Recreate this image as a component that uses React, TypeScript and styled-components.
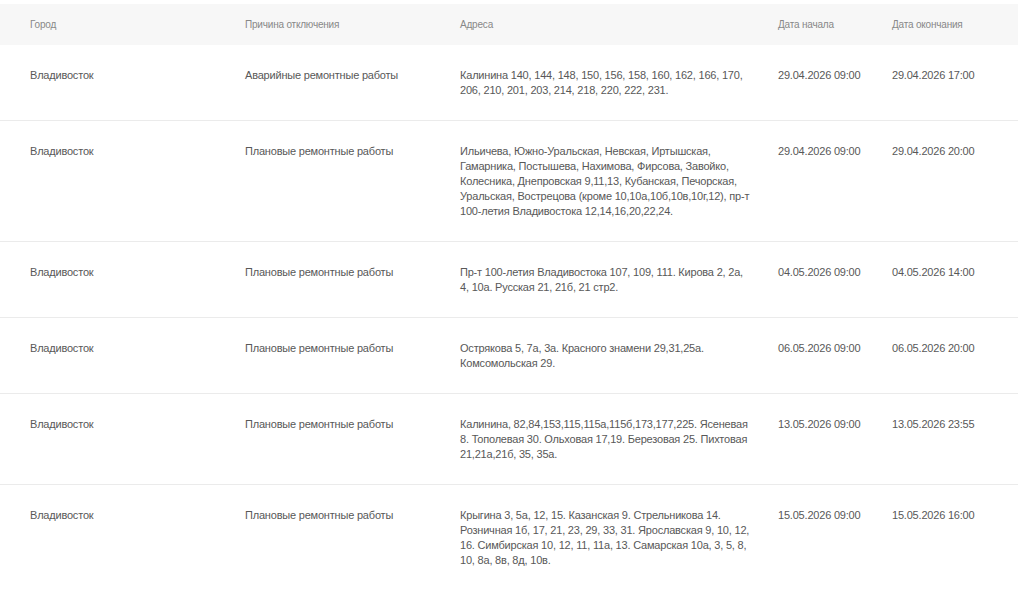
import styled, { createGlobalStyle } from "styled-components";

const GlobalStyle = createGlobalStyle`
  body {
    margin: 0;
    background: #fff;
    font-family: "Liberation Sans", Arial, sans-serif;
  }
`;

const Page = styled.div`
  padding-top: 4px;
  width: 1018px;
`;

const Row = styled.div<{ $head?: boolean }>`
  display: grid;
  grid-template-columns: 215px 215px 318px 114px 1fr;
  background: ${(p) => (p.$head ? "#f7f7f7" : "#fff")};
  border-bottom: ${(p) => (p.$head ? "none" : "1px solid #ebebeb")};
  padding: ${(p) => (p.$head ? "13px 0 13px 30px" : "23px 0 22px 30px")};

  &:last-child {
    border-bottom: none;
  }
`;

const HeadCell = styled.div`
  font-size: 10px;
  line-height: 15px;
  letter-spacing: -0.2px;
  color: #888;
`;

const Cell = styled.div<{ $wide?: boolean }>`
  font-size: 11px;
  line-height: 15px;
  letter-spacing: -0.2px;
  color: #585858;
  padding-right: ${(p) => (p.$wide ? "26px" : "10px")};
`;

type Outage = {
  city: string;
  reason: string;
  address: string;
  start: string;
  end: string;
};

const rows: Outage[] = [
  {
    city: "Владивосток",
    reason: "Аварийные ремонтные работы",
    address:
      "Калинина 140, 144, 148, 150, 156, 158, 160, 162, 166, 170, 206, 210, 201, 203, 214, 218, 220, 222, 231.",
    start: "29.04.2026 09:00",
    end: "29.04.2026 17:00",
  },
  {
    city: "Владивосток",
    reason: "Плановые ремонтные работы",
    address:
      "Ильичева, Южно-Уральская, Невская, Иртышская, Гамарника, Постышева, Нахимова, Фирсова, Завойко, Колесника, Днепровская 9,11,13, Кубанская, Печорская, Уральская, Вострецова (кроме 10,10а,10б,10в,10г,12), пр-т 100-летия Владивостока 12,14,16,20,22,24.",
    start: "29.04.2026 09:00",
    end: "29.04.2026 20:00",
  },
  {
    city: "Владивосток",
    reason: "Плановые ремонтные работы",
    address:
      "Пр-т 100-летия Владивостока 107, 109, 111. Кирова 2, 2а, 4, 10а. Русская 21, 21б, 21 стр2.",
    start: "04.05.2026 09:00",
    end: "04.05.2026 14:00",
  },
  {
    city: "Владивосток",
    reason: "Плановые ремонтные работы",
    address: "Острякова 5, 7а, 3а. Красного знамени 29,31,25а. Комсомольская 29.",
    start: "06.05.2026 09:00",
    end: "06.05.2026 20:00",
  },
  {
    city: "Владивосток",
    reason: "Плановые ремонтные работы",
    address:
      "Калинина, 82,84,153,115,115а,115б,173,177,225. Ясеневая 8. Тополевая 30. Ольховая 17,19. Березовая 25. Пихтовая 21,21а,21б, 35, 35а.",
    start: "13.05.2026 09:00",
    end: "13.05.2026 23:55",
  },
  {
    city: "Владивосток",
    reason: "Плановые ремонтные работы",
    address:
      "Крыгина 3, 5а, 12, 15. Казанская 9. Стрельникова 14. Розничная 1б, 17, 21, 23, 29, 33, 31. Ярославская 9, 10, 12, 16. Симбирская 10, 12, 11, 11а, 13. Самарская 10а, 3, 5, 8, 10, 8а, 8в, 8д, 10в.",
    start: "15.05.2026 09:00",
    end: "15.05.2026 16:00",
  },
];

export default function App() {
  return (
    <>
      <GlobalStyle />
      <Page>
        <Row $head>
          <HeadCell>Город</HeadCell>
          <HeadCell>Причина отключения</HeadCell>
          <HeadCell>Адреса</HeadCell>
          <HeadCell>Дата начала</HeadCell>
          <HeadCell>Дата окончания</HeadCell>
        </Row>
        {rows.map((r, i) => (
          <Row key={i}>
            <Cell>{r.city}</Cell>
            <Cell>{r.reason}</Cell>
            <Cell $wide>{r.address}</Cell>
            <Cell>{r.start}</Cell>
            <Cell>{r.end}</Cell>
          </Row>
        ))}
      </Page>
    </>
  );
}
